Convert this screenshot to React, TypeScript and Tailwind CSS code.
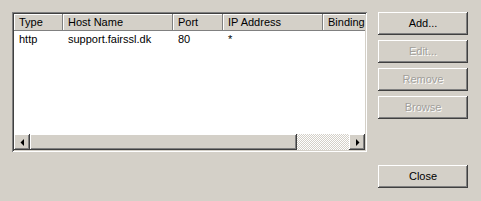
const raised =
  'shadow-[inset_-1px_-1px_#404040,inset_1px_1px_#ffffff,inset_-2px_-2px_#808080,inset_2px_2px_#d4d0c8]'

const columns = [
  { label: 'Type', width: 'w-[49px]' },
  { label: 'Host Name', width: 'w-[110px]' },
  { label: 'Port', width: 'w-[50px]' },
  { label: 'IP Address', width: 'w-[100px]' },
  { label: 'Binding', width: 'w-[60px]' },
]

const rows = [['http', 'support.fairssl.dk', '80', '*', '']]

function Arrow({ dir }: { dir: 'left' | 'right' }) {
  return (
    <svg width="4" height="7" viewBox="0 0 4 7" className="block">
      {dir === 'left' ? (
        <path d="M4 0 L4 7 L0.5 3.5 Z" fill="#000" />
      ) : (
        <path d="M0 0 L0 7 L3.5 3.5 Z" fill="#000" />
      )}
    </svg>
  )
}

function Button({ label, disabled = false }: { label: string; disabled?: boolean }) {
  return (
    <div
      className={`flex h-[23px] w-[90px] items-center justify-center bg-[#d4d0c8] ${raised} ${
        disabled ? 'text-[#a19f9b] [text-shadow:1px_1px_0_#ffffff]' : 'text-black'
      }`}
    >
      {label}
    </div>
  )
}

export default function App() {
  return (
    <div className="flex h-[201px] w-[481px] bg-[#d4d0c8] pl-[12px] pt-[12px] font-['Liberation_Sans',Arial,sans-serif] text-[11px] leading-none">
      {/* list view, sunken */}
      <div className="flex h-[140px] w-[355px] flex-col bg-white p-[2px] shadow-[inset_1px_1px_#808080,inset_-1px_-1px_#ffffff,inset_2px_2px_#404040,inset_-2px_-2px_#d4d0c8]">
        <div className="flex min-h-0 flex-1 flex-col overflow-hidden">
          <div className="flex h-[17px] shrink-0 overflow-hidden bg-[#d4d0c8]">
            {columns.map((c) => (
              <div
                key={c.label}
                className={`${c.width} flex shrink-0 items-center overflow-hidden whitespace-nowrap pl-[5px] shadow-[inset_-1px_-1px_#808080,inset_1px_1px_#ffffff]`}
              >
                {c.label}
              </div>
            ))}
          </div>
          {rows.map((r, i) => (
            <div key={i} className="flex h-[16px] items-center">
              {r.map((cell, j) => (
                <div key={j} className={`${columns[j].width} shrink-0 overflow-hidden whitespace-nowrap pl-[5px]`}>
                  {cell}
                </div>
              ))}
            </div>
          ))}
        </div>
        {/* horizontal scroll bar */}
        <div className="flex h-[16px] shrink-0">
          <div className={`flex w-[16px] items-center justify-center bg-[#d4d0c8] pr-[1px] ${raised}`}>
            <Arrow dir="left" />
          </div>
          <div className={`w-[267px] bg-[#d4d0c8] ${raised}`} />
          <div className="flex-1 bg-[repeating-conic-gradient(#ffffff_0_25%,#d4d0c8_0_50%)] bg-[length:2px_2px]" />
          <div className={`flex w-[16px] items-center justify-center bg-[#d4d0c8] pl-[1px] ${raised}`}>
            <Arrow dir="right" />
          </div>
        </div>
      </div>

      {/* buttons */}
      <div className="ml-[11px] flex flex-col">
        <div className="flex flex-col gap-[5px]">
          <Button label="Add..." />
          <Button label="Edit..." disabled />
          <Button label="Remove" disabled />
          <Button label="Browse" disabled />
        </div>
        <div className="mt-[46px]">
          <Button label="Close" />
        </div>
      </div>
    </div>
  )
}
